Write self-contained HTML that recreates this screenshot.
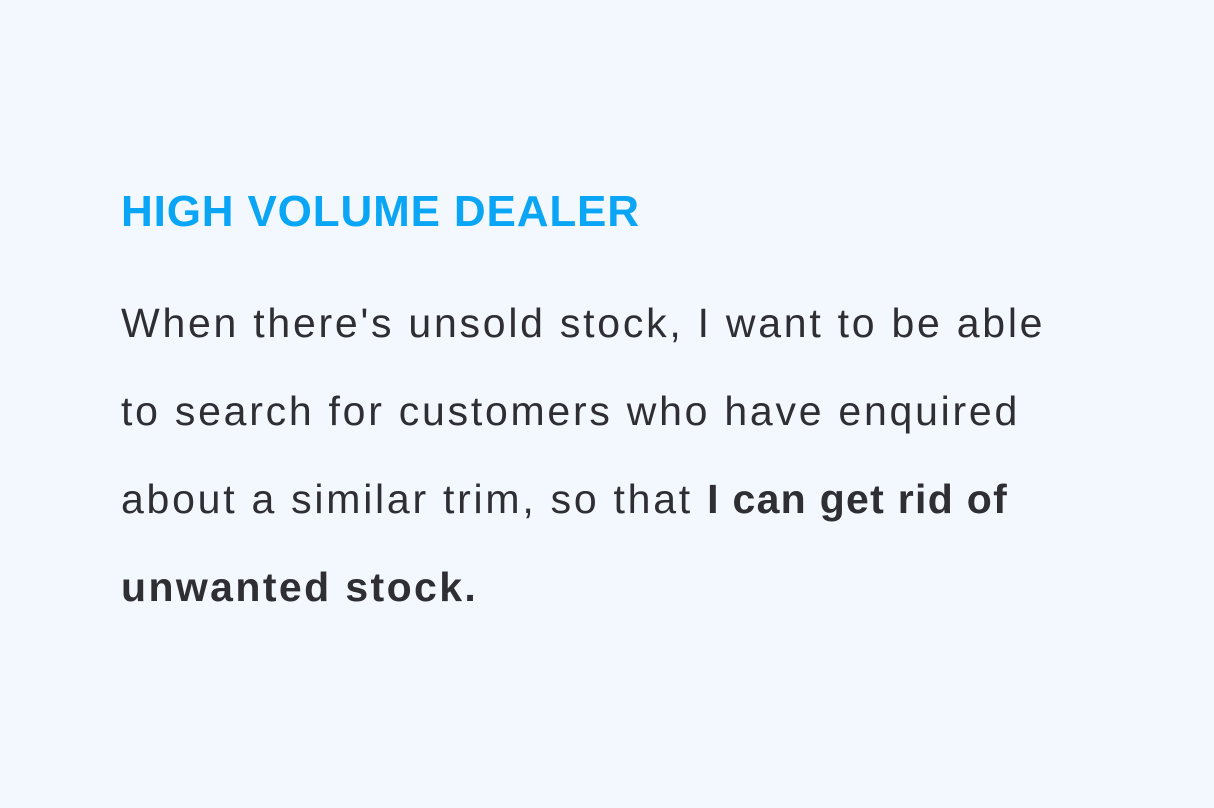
<!DOCTYPE html>
<html><head><meta charset="utf-8"><style>
html,body{margin:0;padding:0;}
body{width:1214px;height:808px;background:#f2f8fe;overflow:hidden;position:relative;font-family:"Liberation Sans",sans-serif;}
h1{position:absolute;left:121px;top:182px;margin:0;font-size:44px;line-height:60px;font-weight:bold;color:#0aa6f5;white-space:nowrap;letter-spacing:0.85px;}
p{position:absolute;left:121px;top:279px;margin:0;font-size:41px;line-height:88px;color:#2e2e33;white-space:nowrap;letter-spacing:2.75px;}
b{font-weight:bold;letter-spacing:2.4px;}
b.s{letter-spacing:1.3px;}
</style></head><body>
<h1>HIGH VOLUME DEALER</h1>
<p>When there's unsold stock, I want to be able<br>to search for customers who have enquired<br>about a similar trim, so that <b class="s">I can get rid of</b><br><b>unwanted stock.</b></p>
</body></html>
